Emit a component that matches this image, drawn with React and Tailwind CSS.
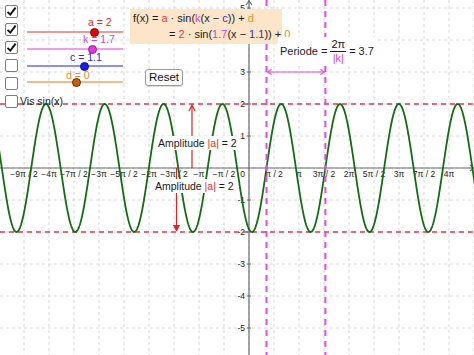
import React from "react";

const X0 = 249;
const SX = 50 / Math.PI;
const Y0 = 168;
const SY = 32;
const W = 474;
const H = 355;
const py = (v) => Y0 - v * SY;
const px = (v) => X0 + v * SX;

function curvePath() {
  let d = "";
  for (let p = -2; p <= W + 2; p += 0.5) {
    const x = (p - X0) / SX;
    const y = 2 * Math.sin(1.7 * (x - 1.1));
    d += (d ? "L" : "M") + p.toFixed(1) + " " + py(y).toFixed(2) + " ";
  }
  return d;
}

const xLabels = [
  [-9, "−9π / 2"],
  [-8, "−4π"],
  [-7, "−7π / 2"],
  [-6, "−3π"],
  [-5, "−5π / 2"],
  [-4, "−2π"],
  [-3, "−3π / 2"],
  [-2, "−π"],
  [-1, "−π / 2"],
  [1, "π / 2"],
  [2, "π"],
  [3, "3π / 2"],
  [4, "2π"],
  [5, "5π / 2"],
  [6, "3π"],
  [7, "7π / 2"],
  [8, "4π"],
];

function Graph() {
  const vGrid = [];
  for (let n = -10; n <= 9; n++) vGrid.push(X0 + 25 * n);
  const hGrid = [];
  for (let m = -6; m <= 6; m++) hGrid.push(Y0 - 32 * m);
  const m1 = px(1.1);
  const m2 = px(1.1 + 3.7);
  return (
    <svg className="absolute inset-0 block" width={W} height={H} viewBox={`0 0 ${W} ${H}`}>
      {vGrid.map((x) => (
        <line key={"v" + x} x1={x} y1={0} x2={x} y2={H} stroke="#d6d6d6" strokeWidth="1" strokeDasharray="3 3" />
      ))}
      {hGrid.map((y) => (
        <line key={"h" + y} x1={0} y1={y} x2={W} y2={y} stroke="#d6d6d6" strokeWidth="1" strokeDasharray="3 3" />
      ))}
      {/* axes */}
      <line x1={0} y1={Y0} x2={W} y2={Y0} stroke="#6b6b6b" strokeWidth="1.2" />
      <line x1={X0} y1={0} x2={X0} y2={H} stroke="#6b6b6b" strokeWidth="1.2" />
      <path d={`M${X0 - 3} 5 L${X0} 1 L${X0 + 3} 5`} fill="none" stroke="#6b6b6b" strokeWidth="1.2" />
      <path d={`M${W - 4} ${Y0 - 3} L${W} ${Y0} L${W - 4} ${Y0 + 3}`} fill="none" stroke="#6b6b6b" strokeWidth="1.2" />
      {/* y ticks + labels */}
      {[5, 3, 2, 1, -1, -2, -3, -4, -5].map((v) => (
        <g key={"y" + v}>
          <line x1={X0 - 2} y1={py(v)} x2={X0 + 2} y2={py(v)} stroke="#6b6b6b" strokeWidth="1" />
          <text x={X0 - 4} y={py(v) + 3} fontSize="8.5" textAnchor="end" fill="#222">
            {v < 0 ? "-" + Math.abs(v) : String(v)}
          </text>
        </g>
      ))}
      {xLabels.map(([n, t]) => (
        <text key={"x" + n} x={X0 + 25 * n} y={Y0 + 9} fontSize="8.5" textAnchor="middle" fill="#222">
          {t}
        </text>
      ))}
      <text x={X0 - 4} y={Y0 + 9} fontSize="8.5" textAnchor="end" fill="#222">0</text>

      {/* amplitude dashed lines */}
      <line x1={0} y1={py(2)} x2={W} y2={py(2)} stroke="#e23a4c" strokeWidth="1.5" strokeDasharray="5 4" />
      <line x1={0} y1={py(-2)} x2={W} y2={py(-2)} stroke="#e23a4c" strokeWidth="1.5" strokeDasharray="5 4" />

      {/* curve */}
      <path d={curvePath()} fill="none" stroke="#136b13" strokeWidth="1.8" />

      {/* magenta period lines */}
      <line x1={m1} y1={0} x2={m1} y2={H} stroke="#e24ce2" strokeWidth="2" strokeDasharray="6 5" />
      <line x1={m2} y1={0} x2={m2} y2={H} stroke="#e24ce2" strokeWidth="2" strokeDasharray="6 5" />
      <line x1={m1 + 1} y1={72} x2={m2 - 1} y2={72} stroke="#e04ce0" strokeWidth="1.2" />
      <path d={`M${m1 + 5} 69.5 L${m1 + 1} 72 L${m1 + 5} 74.5`} fill="none" stroke="#e04ce0" strokeWidth="1.2" />
      <path d={`M${m2 - 5} 69.5 L${m2 - 1} 72 L${m2 - 5} 74.5`} fill="none" stroke="#e04ce0" strokeWidth="1.2" />

      {/* amplitude arrows */}
      <line x1={192} y1={Y0} x2={192} y2={py(2) + 2} stroke="#e02020" strokeWidth="1.2" />
      <path d={`M189 ${py(2) + 7} L192 ${py(2) + 1} L195 ${py(2) + 7}`} fill="none" stroke="#e02020" strokeWidth="1.2" />
      <line x1={176.5} y1={Y0} x2={176.5} y2={py(-2) - 2} stroke="#e02020" strokeWidth="1.2" />
      <path d={`M173.5 ${py(-2) - 7} L176.5 ${py(-2) - 1} L179.5 ${py(-2) - 7}`} fill="#e02020" stroke="#e02020" strokeWidth="1" />
    </svg>
  );
}

function Check({ checked }) {
  return (
    <div className="w-[13px] h-[13px] rounded-[2px] border border-[#7d7d7d] bg-white flex items-center justify-center shrink-0">
      {checked && (
        <svg width="11" height="11" viewBox="0 0 11 11">
          <path d="M1.5 5.8 L4.3 8.6 L9.6 1.6" fill="none" stroke="#111" strokeWidth="1.9" strokeLinejoin="miter" />
        </svg>
      )}
    </div>
  );
}

function Slider({ y, dot, line, dotFill, dotStroke, label, labelColor, labelX, labelY }) {
  return (
    <>
      <div className={`absolute left-[27px] w-[96px] h-[2.5px] ${line}`} style={{ top: y - 1.25 }} />
      <div
        className={`absolute w-[9px] h-[9px] rounded-full border ${dotFill} ${dotStroke}`}
        style={{ left: dot - 4.5, top: y - 4.5 }}
      />
      <div
        className={`absolute text-[10.5px] leading-[12px] whitespace-nowrap ${labelColor}`}
        style={{ left: labelX, top: labelY - 6 }}
      >
        {label}
      </div>
    </>
  );
}

export default function App() {
  return (
    <div className="relative w-[474px] h-[355px] overflow-hidden bg-white font-['Liberation_Sans',Arial,sans-serif] text-[#1a1a1a]">
      <Graph />

      {/* checkboxes */}
      <div className="absolute left-[5px] top-[5px] flex flex-col gap-[5px]">
        <Check checked />
        <Check checked />
        <Check checked />
        <Check />
        <Check />
        <div className="flex items-center gap-[2px]">
          <Check />
          <span className="text-[10.5px] leading-[13px] text-[#222]">Vis sin(x)</span>
        </div>
      </div>

      {/* sliders */}
      <Slider y={32} dot={94} line="bg-[#ee9a9a]" dotFill="bg-[#dd0a0a]" dotStroke="border-[#8a0000]" label="a = 2" labelColor="text-[#e02a2a]" labelX={88} labelY={22} />
      <Slider y={49} dot={92} line="bg-[#f19cf1]" dotFill="bg-[#d83cd8]" dotStroke="border-[#9a209a]" label="k = 1.7" labelColor="text-[#d23fd2]" labelX={83} labelY={39} />
      <Slider y={66} dot={84} line="bg-[#8f8fef]" dotFill="bg-[#1d1de8]" dotStroke="border-[#10108a]" label="c = 1.1" labelColor="text-[#2d2dc8]" labelX={70} labelY={57} />
      <Slider y={82} dot={76} line="bg-[#f2b98a]" dotFill="bg-[#c45f12]" dotStroke="border-[#5a2c08]" label="d = 0" labelColor="text-[#e8892e]" labelX={66} labelY={75} />

      {/* formula box */}
      <div className="absolute left-[130px] top-[9px] w-[152px] h-[35px] bg-[#fce5c9] pl-[3px] pt-[1px] text-[11px] leading-[16px] whitespace-nowrap text-[#1a1a1a]">
        <div>
          f(x) = <span className="text-[#e33b3b]">a</span> · sin(<span className="text-[#d63fd6]">k</span>(x − <span className="text-[#3030c4]">c</span>)) + <span className="text-[#e8902f]">d</span>
        </div>
        <div className="pl-[36px]">
          = <span className="text-[#e33b3b]">2</span> · sin(<span className="text-[#d63fd6]">1.7</span>(x − <span className="text-[#3030c4]">1.1</span>)) + <span className="text-[#e8902f]">0</span>
        </div>
      </div>

      {/* reset button */}
      <button className="absolute left-[145px] top-[69px] w-[38px] h-[17px] rounded-[3px] border border-[#9a9a9a] bg-white text-[11.5px] leading-[15px] text-[#111] shadow-[0_1px_1px_rgba(0,0,0,0.15)] flex items-center justify-center">
        Reset
      </button>

      {/* periode text */}
      <div className="absolute left-[278px] top-[37px] h-[29px] bg-white flex items-center gap-[3px] px-[2px] text-[11px] text-[#1a1a1a] whitespace-nowrap">
        <span>Periode =</span>
        <span className="inline-flex flex-col items-center leading-[11px]">
          <span className="px-[1px] border-b border-[#1a1a1a] pb-[1px]">2π</span>
          <span className="pt-[1px] text-[#d63fd6]">|k|</span>
        </span>
        <span>= 3.7</span>
      </div>

      {/* amplitude labels */}
      <div className="absolute left-[156px] top-[136px] bg-white px-[2px] text-[10.5px] leading-[14px] whitespace-nowrap">
        Amplitude <span className="text-[#e03030]">|a|</span> = 2
      </div>
      <div className="absolute left-[153px] top-[179px] bg-white px-[2px] text-[10.5px] leading-[14px] whitespace-nowrap">
        Amplitude <span className="text-[#e03030]">|a|</span> = 2
      </div>
    </div>
  );
}
